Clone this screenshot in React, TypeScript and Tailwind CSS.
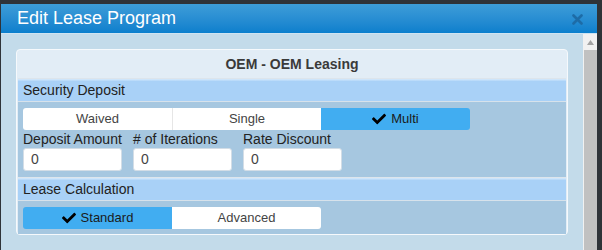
import { FaCheck } from "react-icons/fa";

function Segment({ options, selected }: { options: string[]; selected: string }) {
  return (
    <div className="flex rounded-[3px] overflow-hidden w-fit">
      {options.map((opt, i) => (
        <div
          key={opt}
          className={`w-[149px] h-[22px] flex items-center justify-center gap-[5px] text-[13px] ${
            opt === selected ? "bg-[#41adf1] text-[#1b1b1b]" : "bg-white text-[#444]"
          } ${i > 0 && opt !== selected && options[i - 1] !== selected ? "border-l border-[#e6e6e6]" : ""}`}
        >
          {opt === selected && <FaCheck className="w-[14px] h-[14px] text-black" />}
          <span>{opt}</span>
        </div>
      ))}
    </div>
  );
}

function SectionHeader({ title }: { title: string }) {
  return (
    <div className="h-[24px] border-t border-[#dde5ec] bg-gradient-to-b from-[#d6eafc] via-[#a9d1f7] to-[#a9d1f7] bg-[length:100%_5px] bg-no-repeat bg-[#a9d1f7] flex items-center px-[5px] text-[14px] text-[#222] border-b border-b-[#d7e2eb]">
      {title}
    </div>
  );
}

export default function App() {
  const fields = ["Deposit Amount", "# of Iterations", "Rate Discount"];

  return (
    <div
      className="w-[602px] h-[250px] bg-[#2f3338] pt-[4px] pl-[1px] pr-[5px] overflow-hidden"
      style={{ fontFamily: '"Liberation Sans", Arial, sans-serif' }}
    >
      <div className="h-full flex flex-col">
        {/* title bar */}
        <div className="h-[30px] shrink-0 bg-gradient-to-b from-[#3d9dd8] to-[#0a7fcd] border-b border-[#cfe3f1] flex items-center justify-between pl-[16px] pr-[14px]">
          <span className="text-white text-[18px]">Edit Lease Program</span>
          <svg width="11" height="11" viewBox="0 0 11 11" className="mt-[1px]">
            <path d="M1.5 1.5 L9.5 9.5 M9.5 1.5 L1.5 9.5" stroke="#1d6ca7" strokeWidth="2.6" strokeLinecap="round" />
          </svg>
        </div>

        <div className="flex-1 flex bg-[#c3dbea]">
          <div className="flex-1 pl-[15px] pt-[15px] pr-[15px]">
            <div className="border border-[#f6f9fc] rounded-[4px] bg-[#e2edf6] p-[1px] pb-0">
              <div className="h-[27px] flex items-center justify-center text-[14px] font-bold text-[#3a3a3a]">
                OEM - OEM Leasing
              </div>

              <SectionHeader title="Security Deposit" />
              <div className="bg-[#a6c7e0] px-[5px] pt-[6px] pb-[6px]">
                <Segment options={["Waived", "Single", "Multi"]} selected="Multi" />
                <div className="flex gap-[11px]">
                  {fields.map((f) => (
                    <div key={f} className="flex flex-col">
                      <span className="text-[14px] leading-[18px] text-[#222] whitespace-nowrap">{f}</span>
                      <div className="w-[99px] h-[23px] bg-white rounded-[3px] border border-[#d3dde6] flex items-center px-[7px] text-[14px] text-[#444]">
                        0
                      </div>
                    </div>
                  ))}
                </div>
              </div>

              <SectionHeader title="Lease Calculation" />
              <div className="bg-[#a6c7e0] px-[5px] pt-[6px] pb-[5px]">
                <Segment options={["Standard", "Advanced"]} selected="Standard" />
              </div>
            </div>
          </div>

          {/* scrollbar */}
          <div className="w-[14px] bg-[#f1f1f1] flex flex-col items-center">
            <div className="h-[16px] flex items-center justify-center">
              <svg width="7" height="5" viewBox="0 0 7 5">
                <path d="M3.5 0 L7 5 L0 5 Z" fill="#a3a3a3" />
              </svg>
            </div>
            <div className="w-[13px] ml-[1px] flex-1 bg-[#c1c1c1]" />
          </div>
        </div>
      </div>
    </div>
  );
}
